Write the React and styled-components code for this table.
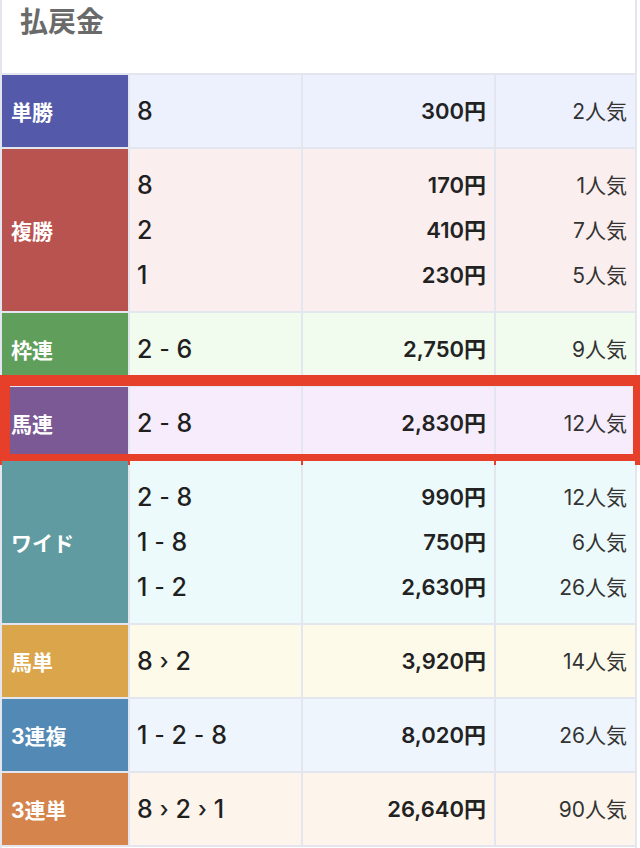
import * as React from "react";
import styled, { createGlobalStyle } from "styled-components";

const GlobalStyle = createGlobalStyle`
  body {
    margin: 0;
    background: #ffffff;
    font-family: "Noto Sans CJK JP", "Noto Sans", sans-serif;
  }
`;

const lineColor = "#e3e6ee";
const numFont = `"Inter", "Noto Sans CJK JP", sans-serif`;

const Page = styled.div`
  width: 637px;
  box-sizing: border-box;
  border-left: 2px solid ${lineColor};
  border-right: 2px solid ${lineColor};
  min-height: 848px;
`;

const Title = styled.h2`
  margin: 0;
  height: 73px;
  padding: 2px 0 0 18px;
  box-sizing: border-box;
  font-size: 28px;
  line-height: 36px;
  font-weight: 700;
  color: #6a6a6a;
`;

const Table = styled.div`
  display: flex;
  flex-direction: column;
  gap: 2px;
  padding: 2px 0;
  background: ${lineColor};
`;

const Row = styled.div`
  position: relative;
  display: grid;
  grid-template-columns: 126px 171px 191px 1fr;
  column-gap: 2px;
  height: ${(p) => (p.$lines > 1 ? 162 : 72)}px;
`;

const Label = styled.div`
  display: flex;
  align-items: center;
  padding-left: 9px;
  background: ${(p) => p.$color};
  color: #ffffff;
  font-family: ${numFont};
  font-size: 21px;
  font-weight: 700;
`;

const Cell = styled.div`
  display: flex;
  flex-direction: column;
  justify-content: center;
  gap: 10px;
  background: ${(p) => p.$bg};
  padding: ${(p) => (p.$align === "right" ? "0 8px 0 0" : "0 0 0 7px")};
  align-items: ${(p) => (p.$align === "right" ? "flex-end" : "flex-start")};
`;

const Combo = styled.div`
  display: flex;
  align-items: center;
  gap: 6px;
  height: 35px;
  font-family: ${numFont};
  font-size: 25px;
  color: #1f1f1f;
  font-weight: 500;
`;

const Sep = styled.span`
  font-size: 22px;
  margin: 0 1px;
`;

const Payout = styled.div`
  height: 35px;
  line-height: 35px;
  font-family: ${numFont};
  font-size: 22px;
  font-weight: 600;
  color: #222222;
`;

const Popular = styled.div`
  height: 35px;
  line-height: 35px;
  font-family: ${numFont};
  font-size: 21px;
  font-weight: 400;
  color: #333333;
`;

const Highlight = styled.div`
  position: absolute;
  top: -12px;
  bottom: -6px;
  left: -2px;
  right: -5px;
  border-style: solid;
  border-color: #e6402b;
  border-width: 11px 7px 11px 10px;
  pointer-events: none;
`;

const rows = [
  { name: "単勝", color: "#5459a9", bg: "#edf1fd", items: [["8", "300円", "2人気"]] },
  {
    name: "複勝",
    color: "#b9534f",
    bg: "#fbeeee",
    items: [
      ["8", "170円", "1人気"],
      ["2", "410円", "7人気"],
      ["1", "230円", "5人気"],
    ],
  },
  { name: "枠連", color: "#5f9f5b", bg: "#f1fbee", items: [["2-6", "2,750円", "9人気"]] },
  { name: "馬連", color: "#7b5994", bg: "#f7ecfb", items: [["2-8", "2,830円", "12人気"]], mark: true },
  {
    name: "ワイド",
    color: "#5f9ba1",
    bg: "#edfafb",
    items: [
      ["2-8", "990円", "12人気"],
      ["1-8", "750円", "6人気"],
      ["1-2", "2,630円", "26人気"],
    ],
  },
  { name: "馬単", color: "#dba54b", bg: "#fefaea", items: [["8›2", "3,920円", "14人気"]] },
  { name: "3連複", color: "#5289b5", bg: "#eef5fd", items: [["1-2-8", "8,020円", "26人気"]] },
  { name: "3連単", color: "#d5844b", bg: "#fdf5ec", items: [["8›2›1", "26,640円", "90人気"]] },
];

const ComboText = ({ value }) => {
  const parts = value.split(/([-›])/);
  return (
    <Combo>
      {parts.map((p, i) =>
        p === "-" || p === "›" ? (
          <Sep key={i}>{p}</Sep>
        ) : (
          <span key={i}>{p}</span>
        )
      )}
    </Combo>
  );
};

export default function App() {
  return (
    <Page>
      <GlobalStyle />
      <Title>払戻金</Title>
      <Table>
        {rows.map((r) => (
          <Row key={r.name} $lines={r.items.length}>
            <Label $color={r.color}>{r.name}</Label>
            <Cell $bg={r.bg}>
              {r.items.map((it, i) => (
                <ComboText key={i} value={it[0]} />
              ))}
            </Cell>
            <Cell $bg={r.bg} $align="right">
              {r.items.map((it, i) => (
                <Payout key={i}>{it[1]}</Payout>
              ))}
            </Cell>
            <Cell $bg={r.bg} $align="right">
              {r.items.map((it, i) => (
                <Popular key={i}>{it[2]}</Popular>
              ))}
            </Cell>
            {r.mark && <Highlight />}
          </Row>
        ))}
      </Table>
    </Page>
  );
}
